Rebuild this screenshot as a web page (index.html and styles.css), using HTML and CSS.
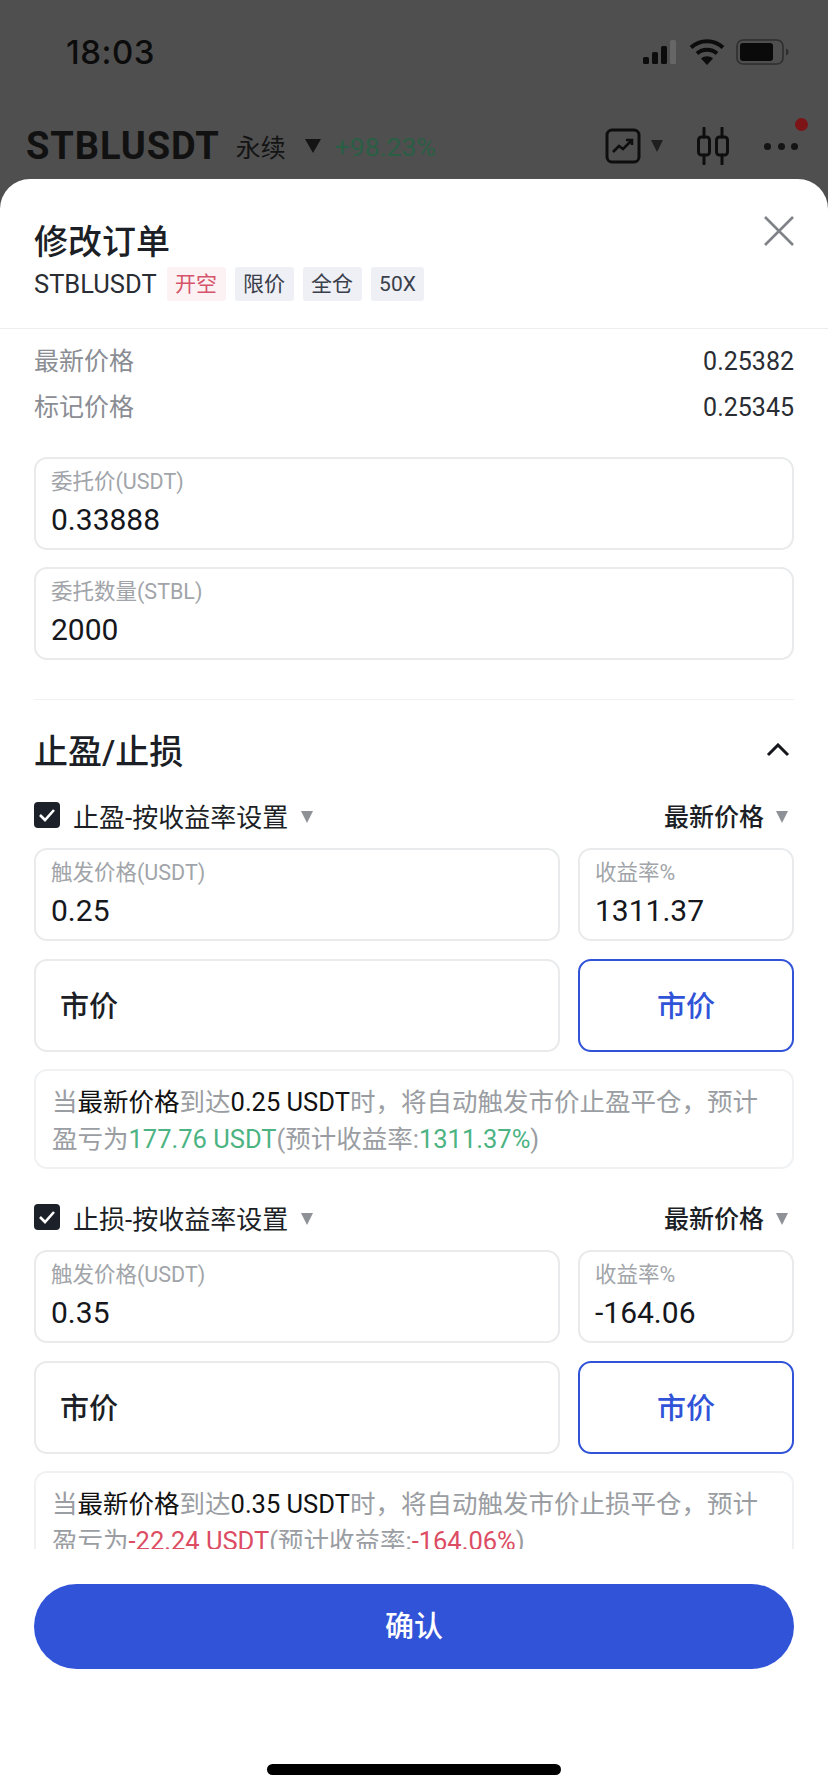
FILE: index.html
```html
<!DOCTYPE html>
<html lang="zh-CN">
<head>
  <meta charset="UTF-8">
  <meta name="viewport" content="width=device-width, initial-scale=1.0">
  <title>修改订单</title>
  <link rel="stylesheet" href="styles.css">
</head>
<body>
  <div class="page">
    <!-- Status bar -->
    <div class="status-bar">
      <span class="clock">18:03</span>
      <div class="status-icons">
        <svg width="36" height="26" viewBox="0 0 36 26">
          <rect x="1" y="18" width="6" height="7" rx="1.5" fill="#0c0c0c"/>
          <rect x="10" y="13" width="6" height="12" rx="1.5" fill="#0c0c0c"/>
          <rect x="19" y="7" width="6" height="18" rx="1.5" fill="#0c0c0c"/>
          <rect x="28" y="1" width="6" height="24" rx="1.5" fill="#666"/>
        </svg>
        <svg width="36" height="28" viewBox="0 0 36 28">
          <path d="M2 9.5C11 1 25 1 34 9.5" fill="none" stroke="#0c0c0c" stroke-width="4"/>
          <path d="M8 15.5C13.5 10.5 22.5 10.5 28 15.5" fill="none" stroke="#0c0c0c" stroke-width="4"/>
          <path d="M12 20.5C15.5 17.5 20.5 17.5 24 20.5L18 27Z" fill="#0c0c0c"/>
        </svg>
        <svg width="54" height="26" viewBox="0 0 54 26">
          <rect x="1" y="1" width="46" height="24" rx="6" fill="none" stroke="#2e2e2e" stroke-width="1.6"/>
          <rect x="4" y="4" width="33" height="18" rx="3" fill="#0a0a0a"/>
          <path d="M50 9.5C52 10.5 52.6 11.5 52.6 13S52 15.5 50 16.5Z" fill="#2e2e2e"/>
        </svg>
      </div>
    </div>

    <!-- Market header behind the sheet -->
    <div class="market-bar">
      <span class="symbol">STBLUSDT</span>
      <span class="market-type">永续</span>
      <span class="caret caret-dark"></span>
      <span class="market-change">+98.23%</span>
      <div class="market-icons">
        <svg width="36" height="36" viewBox="0 0 36 36" class="chart-icon">
          <rect x="2" y="2" width="32" height="32" rx="5" fill="none" stroke="#0e0e0e" stroke-width="3"/>
          <path d="M8 24L14 18L18 21L27 12M21 12H27V17" fill="none" stroke="#0e0e0e" stroke-width="2.6"/>
        </svg>
        <span class="caret caret-small"></span>
        <svg width="36" height="38" viewBox="0 0 36 38" class="candle-icon">
          <path d="M9 1V10M9 28V37M27 1V10M27 28V37" stroke="#0e0e0e" stroke-width="3" stroke-linecap="round"/>
          <rect x="3.5" y="10" width="11" height="18" rx="3" fill="none" stroke="#0e0e0e" stroke-width="3"/>
          <rect x="21.500" y="10" width="11" height="18" rx="3" fill="none" stroke="#0e0e0e" stroke-width="3"/>
        </svg>
        <div class="more-icon">
          <i></i><i></i><i></i>
          <b class="red-dot"></b>
        </div>
      </div>
    </div>

    <!-- Sheet -->
    <div class="sheet">
      <div class="sheet-head">
        <div class="sheet-title">修改订单</div>
        <svg class="close-icon" width="30" height="30" viewBox="0 0 30 30">
          <path d="M1 1L29 29M29 1L1 29" stroke="#7f8287" stroke-width="2.6"/>
        </svg>
        <div class="sheet-sub">
          <span class="sub-symbol">STBLUSDT</span>
          <span class="tag tag-red">开空</span>
          <span class="tag">限价</span>
          <span class="tag">全仓</span>
          <span class="tag">50X</span>
        </div>
      </div>

      <div class="sheet-body">
        <div class="price-row"><span>最新价格</span><em>0.25382</em></div>
        <div class="price-row"><span>标记价格</span><em>0.25345</em></div>

        <div class="field field-main">
          <label>委托价(USDT)</label>
          <div class="value">0.33888</div>
        </div>
        <div class="field field-main field-qty">
          <label>委托数量(STBL)</label>
          <div class="value">2000</div>
        </div>

        <div class="line"></div>

        <div class="section-head">
          <span>止盈/止损</span>
          <svg width="24" height="14" viewBox="0 0 24 14">
            <path d="M2 12L12 2L22 12" fill="none" stroke="#15171c" stroke-width="3"/>
          </svg>
        </div>

        <div class="tp-group">
          <div class="check-row">
            <span class="checkbox">
              <svg width="18" height="14" viewBox="0 0 18 14"><path d="M2 7L7 12L16 2" fill="none" stroke="#fff" stroke-width="2.600"/></svg>
            </span>
            <span class="check-text">止盈-按收益率设置</span>
            <span class="caret caret-gray"></span>
            <span class="check-right">最新价格</span>
            <span class="caret caret-gray caret-end"></span>
          </div>
          <div class="field-grid">
            <div class="field"><label>触发价格(USDT)</label><div class="value">0.25</div></div>
            <div class="field"><label>收益率%</label><div class="value">1311.37</div></div>
            <div class="field market-left"><span>市价</span></div>
            <div class="field market-right"><span>市价</span></div>
          </div>
          <div class="note">当<b>最新价格</b>到达<b>0.25 USDT</b>时，将自动触发市价止盈平仓，预计盈亏为<span class="up">177.76 USDT</span>(预计收益率:<span class="up">1311.37%</span>)</div>
        </div>

        <div class="tp-group">
          <div class="check-row">
            <span class="checkbox">
              <svg width="18" height="14" viewBox="0 0 18 14"><path d="M2 7L7 12L16 2" fill="none" stroke="#fff" stroke-width="2.600"/></svg>
            </span>
            <span class="check-text">止损-按收益率设置</span>
            <span class="caret caret-gray"></span>
            <span class="check-right">最新价格</span>
            <span class="caret caret-gray caret-end"></span>
          </div>
          <div class="field-grid">
            <div class="field"><label>触发价格(USDT)</label><div class="value">0.35</div></div>
            <div class="field"><label>收益率%</label><div class="value">-164.06</div></div>
            <div class="field market-left"><span>市价</span></div>
            <div class="field market-right"><span>市价</span></div>
          </div>
          <div class="note">当<b>最新价格</b>到达<b>0.35 USDT</b>时，将自动触发市价止损平仓，预计盈亏为<span class="down">-22.24 USDT</span>(预计收益率:<span class="down">-164.06%</span>)</div>
        </div>
      </div>

      <div class="sheet-foot">
        <button class="confirm">确认</button>
        <div class="home-bar"></div>
      </div>
    </div>
  </div>
</body>
</html>
```

FILE: styles.css
```css
* {
  box-sizing: border-box;
}

body {
  margin: 0;
  font-family: Roboto, "Noto Sans CJK SC", sans-serif;
  color: #1c1f26;
}

.page {
  width: 828px;
  height: 1792px;
  display: flex;
  flex-direction: column;
  background-color: #4f4f4f;
  overflow: hidden;
}

/* Status bar */
.status-bar {
  height: 106px;
  padding: 32px 38px 0 66px;
  display: flex;
  justify-content: space-between;
  align-items: flex-start;
}

.clock {
  font-family: Inter, sans-serif;
  font-size: 33px;
  line-height: 40px;
  font-weight: 500;
  letter-spacing: 0.5px;
  color: #0c0c0c;
}

.status-icons {
  display: flex;
  align-items: center;
  gap: 11px;
  height: 40px;
}

/* Market bar */
.market-bar {
  height: 73px;
  padding: 7px 30px 0 26px;
  display: flex;
  align-items: center;
  color: #111;
}

.symbol {
  font-size: 38px;
  font-weight: 700;
  letter-spacing: 0.9px;
}

.market-type {
  font-size: 25px;
  margin-left: 16px;
  color: #141414;
}

.market-change {
  font-size: 26.500px;
  margin-left: 14px;
  color: #2a5f45;
}

.market-icons {
  margin-left: auto;
  display: flex;
  align-items: center;
}

.candle-icon {
  margin-left: 32px;
}

.more-icon {
  position: relative;
  display: flex;
  gap: 6.5px;
  margin-left: 33px;
}

.more-icon i {
  width: 7px;
  height: 7px;
  border-radius: 50%;
  background-color: #141414;
}

.red-dot {
  position: absolute;
  top: -25px;
  right: -10px;
  width: 13px;
  height: 13px;
  border-radius: 50%;
  background-color: #7c1418;
}

.caret {
  display: inline-block;
  width: 0;
  height: 0;
  border-style: solid;
  border-color: transparent;
  border-bottom-width: 0;
}

.caret-dark {
  margin-left: 19px;
  border-width: 14px 8px 0;
  border-top-color: #141414;
}

.caret-small {
  margin-left: 10px;
  border-width: 12px 6.5px 0;
  border-top-color: #1f1f1f;
}

.caret-gray {
  margin-top: 3px;
  border-width: 12px 6px 0;
  border-top-color: #8e9196;
}

.caret-end {
  margin-right: 6px;
}

/* Sheet */
.sheet {
  flex: 1;
  min-height: 0;
  display: flex;
  flex-direction: column;
  background-color: #fff;
  border-radius: 30px 30px 0 0;
}

.sheet-head {
  position: relative;
  height: 150px;
  padding: 42px 34px 0;
  border-bottom: 1px solid #eceef0;
}

.sheet-title {
  font-size: 34px;
  line-height: 42px;
  font-weight: 500;
}

.close-icon {
  position: absolute;
  top: 37px;
  right: 34px;
}

.sheet-sub {
  display: flex;
  align-items: center;
  margin-top: 4px;
}

.sub-symbol {
  font-size: 25.500px;
  margin-right: 10px;
  color: #2a2d33;
}

.tag {
  height: 34px;
  line-height: 34px;
  padding: 0 8.500px;
  margin-right: 9px;
  font-size: 21px;
  border-radius: 3px;
  background-color: #eef0f5;
  color: #3a3f4b;
}

.tag-red {
  background-color: #fdf2f3;
  color: #d5546b;
}

/* Scroll area */
.sheet-body {
  flex: 1;
  min-height: 0;
  overflow: hidden;
  padding: 10px 34px 0;
}

.price-row {
  display: flex;
  justify-content: space-between;
  align-items: center;
  height: 46px;
  font-size: 25px;
  line-height: 40px;
  color: #8a8d93;
}

.price-row em {
  font-style: normal;
  font-size: 25px;
  color: #2a2d33;
}

.field {
  border: 2px solid #e9eaec;
  border-radius: 13px;
  height: 93px;
  padding: 10px 15px 0;
  background-color: #fff;
}

.field label {
  display: block;
  font-size: 21.500px;
  line-height: 26px;
  color: #a1a4a9;
}

.value {
  font-size: 30px;
  line-height: 40px;
  font-weight: 450;
  color: #15171c;
  margin-top: 5px;
}

.field-main {
  margin-top: 26px;
}

.field-qty {
  margin-top: 17px;
}

.line {
  height: 1px;
  margin-top: 39px;
  background-color: #f0f1f3;
}

.section-head {
  height: 89px;
  padding: 10px 4px 0 0;
  display: flex;
  justify-content: space-between;
  align-items: center;
  font-size: 34px;
  font-weight: 500;
}

.tp-group {
  margin-bottom: 22px;
}

.check-row {
  height: 52px;
  display: flex;
  align-items: center;
  font-size: 26px;
}

.checkbox {
  width: 26px;
  height: 26px;
  border-radius: 4px;
  background-color: #1c2029;
  display: flex;
  align-items: center;
  justify-content: center;
  margin-right: 13px;
}

.check-text {
  margin-right: 13px;
}

.check-right {
  margin-left: auto;
  margin-right: 12px;
  font-size: 25px;
  font-weight: 500;
}

.field-grid {
  display: grid;
  grid-template-columns: 526px 216px;
  gap: 18px 18px;
  margin-top: 7px;
}

.market-left,
.market-right {
  display: flex;
  align-items: center;
  padding: 0 0 3px;
  font-size: 29px;
  font-weight: 500;
}

.market-left {
  padding-left: 24px;
}

.market-right {
  justify-content: center;
  border-color: #3153d8;
  color: #3153d8;
}

.note {
  margin-top: 17px;
  border: 2px solid #f0f1f3;
  border-radius: 13px;
  height: 100px;
  padding: 12.500px 16px;
  font-size: 25.500px;
  line-height: 37px;
  color: #9a9da2;
}

.note b {
  font-weight: 400;
  color: #111;
}

.up {
  color: #4cb382;
}

.down {
  color: #dc4c63;
}

/* Footer */
.sheet-foot {
  height: 243px;
  padding: 35px 34px 0;
  background-color: #fff;
  display: flex;
  flex-direction: column;
  align-items: center;
}

.confirm {
  width: 100%;
  height: 85px;
  padding-bottom: 6px;
  border: none;
  border-radius: 43px;
  background-color: #3153d8;
  color: #fff;
  font-family: inherit;
  font-size: 29px;
  font-weight: 500;
}

.home-bar {
  width: 294px;
  height: 11px;
  margin-top: 95px;
  border-radius: 6px;
  background-color: #000;
}
```
